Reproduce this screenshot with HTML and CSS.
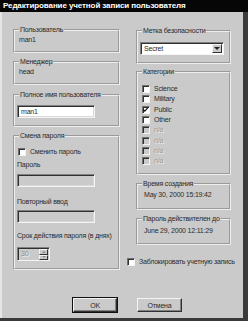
FILE: index.html
```html
<!DOCTYPE html>
<html lang="ru">
<head>
  <meta charset="UTF-8" />
  <title>Редактирование учетной записи пользователя</title>
  <link rel="stylesheet" href="styles.css">
</head>
<body>
  <div class="window">
    <div class="titlebar">Редактирование учетной записи пользователя</div>

    <div class="content">
      <!-- левая колонка -->
      <div class="col left">
        <fieldset class="group g-user">
          <legend>Пользователь</legend>
          <div class="value">man1</div>
        </fieldset>
        <fieldset class="group g-manager">
          <legend>Менеджер</legend>
          <div class="value">head</div>
        </fieldset>
        <fieldset class="group g-fullname">
          <legend>Полное имя пользователя</legend>
          <div class="field name-field">man1</div>
        </fieldset>
        <fieldset class="group g-password">
          <legend>Смена пароля</legend>
          <label class="check change-pass"><span class="box"></span>Сменить пароль</label>
          <div class="caption cap-pass">Пароль</div>
          <div class="field disabled pass-field"></div>
          <div class="caption cap-repeat">Повторный ввод</div>
          <div class="field disabled repeat-field"></div>
          <div class="caption cap-term">Срок действия пароля (в днях)</div>
          <div class="spinner">
            <span class="spin-value">30</span>
            <span class="spin-buttons">
              <span class="spin-btn"><i class="arrow up"></i></span>
              <span class="spin-btn"><i class="arrow down"></i></span>
            </span>
          </div>
        </fieldset>
      </div>

      <!-- правая колонка -->
      <div class="col right">
        <fieldset class="group g-label">
          <legend>Метка безопасности</legend>
          <div class="combo">
            <span class="combo-text">Secret</span>
            <span class="combo-btn"><i class="arrow down"></i></span>
          </div>
        </fieldset>
        <fieldset class="group g-cats">
          <legend>Категории</legend>
          <label class="check cat"><span class="box"></span>Science</label>
          <label class="check cat"><span class="box"></span>Military</label>
          <label class="check cat"><span class="box"><svg viewBox="0 0 8 8" width="8" height="8"><path d="M1.5 3.5 L3.2 5.4 L6.6 1.6" fill="none" stroke="#111" stroke-width="1.3"/></svg></span>Public</label>
          <label class="check cat"><span class="box"></span>Other</label>
          <label class="check cat off"><span class="box"></span>n/a</label>
          <label class="check cat off"><span class="box"></span>n/a</label>
          <label class="check cat off"><span class="box"></span>n/a</label>
          <label class="check cat off"><span class="box"></span>n/a</label>
        </fieldset>
        <fieldset class="group g-created">
          <legend>Время создания</legend>
          <div class="value date">May 30, 2000 15:19:42</div>
        </fieldset>
        <fieldset class="group g-valid">
          <legend>Пароль действителен до</legend>
          <div class="value date">June 29, 2000 12:11:29</div>
        </fieldset>
        <label class="check lock"><span class="box"></span>Заблокировать учетную запись</label>
      </div>
    </div>

    <div class="buttons">
      <button class="btn default">OK</button>
      <button class="btn">Отмена</button>
    </div>
  </div>
</body>
</html>
```

FILE: styles.css
```css
* {
  box-sizing: border-box;
}
html, body {
  margin: 0;
  padding: 0;
  background: #3a3a3a;
}
body {
  font-family: 'Liberation Sans', Arial, sans-serif;
  font-size: 7px;
  letter-spacing: -0.2px;
  line-height: 10px;
  color: #2a2a2a;
}
.window {
  width: 243px;
  height: 318px;
  background: #cacaca;
  border-left: 2px solid #e6e6e6;
}
.titlebar {
  height: 12px;
  margin-left: -2px;
  width: 248px;
  background: #060606;
  color: #fff;
  font-weight: bold;
  font-size: 8px;
  letter-spacing: -0.1px;
  line-height: 12px;
  padding-left: 3px;
  white-space: nowrap;
}
.content {
  display: grid;
  grid-template-columns: 107px 95px;
  column-gap: 16px;
  padding-left: 11px;
  height: 258px;
}
.col {
  display: flex;
  flex-direction: column;
}

/* рамки групп */
.group {
  margin: 0;
  padding: 0 2px;
  border: 2px groove #eeeeee;
  min-width: 0;
}
.group legend {
  padding: 0 1px;
  margin-left: 2px;
  line-height: 10px;
  white-space: nowrap;
}
.value {
  padding-left: 2px;
  white-space: nowrap;
}
.g-user { margin-top: 13px; height: 28px; }
.g-manager { margin-top: 4px; height: 28px; }
.g-fullname { margin-top: 5px; height: 37px; }
.g-password { margin-top: 4px; height: 139px; }
.g-label { margin-top: 14px; height: 38px; }
.g-cats { margin-top: 3px; height: 108px; }
.g-created { margin-top: 4px; height: 31px; }
.g-valid { margin-top: 4px; height: 31px; }
.date {
  padding-left: 4px;
}
.g-created .date { margin-top: 1px; }
.g-valid .date { margin-top: 2px; }

/* поля ввода */
.field {
  height: 13px;
  width: 78px;
  background: #fff;
  border: 1px solid;
  border-color: #808080 #f4f4f4 #f4f4f4 #808080;
  box-shadow: inset 1px 1px #303030, inset -1px -1px #d8d8d8;
  padding: 0 3px;
  line-height: 11px;
}
.field.disabled {
  background: #cacaca;
}
.name-field { margin-top: 5px; }
.cap-pass { margin-top: 3px; }
.pass-field { margin-top: 4px; }
.cap-repeat { margin-top: 10px; }
.repeat-field { margin-top: 3px; }
.cap-term { margin-top: 8px; white-space: nowrap; }

.spinner {
  margin-top: 6px;
  width: 33px;
  height: 14px;
  display: flex;
  background: #cacaca;
  border: 1px solid;
  border-color: #808080 #f4f4f4 #f4f4f4 #808080;
  box-shadow: inset 1px 1px #303030;
}
.spin-value {
  flex: 1;
  color: #8c8c8c;
  text-shadow: 1px 1px #f0f0f0;
  padding: 1px 0 0 3px;
}
.spin-buttons {
  display: flex;
  flex-direction: column;
  width: 9px;
  margin: 1px 1px 0 0;
}
.spin-btn {
  flex: 1;
  display: flex;
  align-items: center;
  justify-content: center;
  border: 1px solid;
  border-color: #f4f4f4 #303030 #303030 #f4f4f4;
  background: #cacaca;
}

/* стрелки */
.arrow {
  width: 0;
  height: 0;
  border-left: 2px solid transparent;
  border-right: 2px solid transparent;
}
.arrow.down {
  border-top: 2px solid #222;
}
.arrow.up {
  border-bottom: 2px solid #222;
}
.spin-btn .arrow.down,
.spin-btn .arrow.up {
  border-top-color: #8c8c8c;
  border-bottom-color: #8c8c8c;
}

/* выпадающий список */
.combo {
  margin-top: 6px;
  width: 84px;
  height: 13px;
  display: flex;
  background: #fff;
  border: 1px solid;
  border-color: #808080 #f4f4f4 #f4f4f4 #808080;
  box-shadow: inset 1px 1px #303030;
}
.combo-text {
  flex: 1;
  padding: 1px 0 0 3px;
  line-height: 10px;
}
.combo-btn {
  width: 10px;
  margin: 1px 1px 1px 0;
  display: flex;
  align-items: center;
  justify-content: center;
  background: #cacaca;
  border: 1px solid;
  border-color: #f4f4f4 #303030 #303030 #f4f4f4;
}
.combo-btn .arrow {
  border-left-width: 3px;
  border-right-width: 3px;
  border-top-width: 3px;
}

/* флажки */
.check {
  display: flex;
  align-items: center;
  height: 10px;
  white-space: nowrap;
}
.check .box {
  width: 8px;
  height: 8px;
  margin-right: 4px;
  background: #fff;
  border: 1px solid;
  border-color: #707070 #f4f4f4 #f4f4f4 #707070;
  box-shadow: inset 1px 1px #303030;
  display: flex;
  flex-shrink: 0;
}
.check .box svg {
  margin: -1px 0 0 -1px;
}
.change-pass {
  margin-top: 6px;
  padding-left: 1px;
}
.cat {
  height: 10.3px;
  padding-left: 2px;
}
.cat:first-of-type {
  margin-top: 7px;
}
.check.off {
  color: #9a9a9a;
  text-shadow: 1px 1px #ededed;
}
.check.off .box {
  background: #cacaca;
}
.lock {
  margin-top: 12px;
  margin-left: -9px;
}

/* кнопки */
.buttons {
  display: flex;
  gap: 20px;
  padding-left: 71px;
  margin-top: 28px;
}
.btn {
  width: 44px;
  height: 14px;
  padding: 0;
  font-family: inherit;
  font-size: 7px;
  letter-spacing: -0.2px;
  color: #2a2a2a;
  background: #cacaca;
  border: 1px solid;
  border-color: #f4f4f4 #303030 #303030 #f4f4f4;
  box-shadow: inset -1px -1px #808080;
}
.btn + .btn {
  width: 45px;
}
.btn.default {
  outline: 1px solid #111;
}
```
